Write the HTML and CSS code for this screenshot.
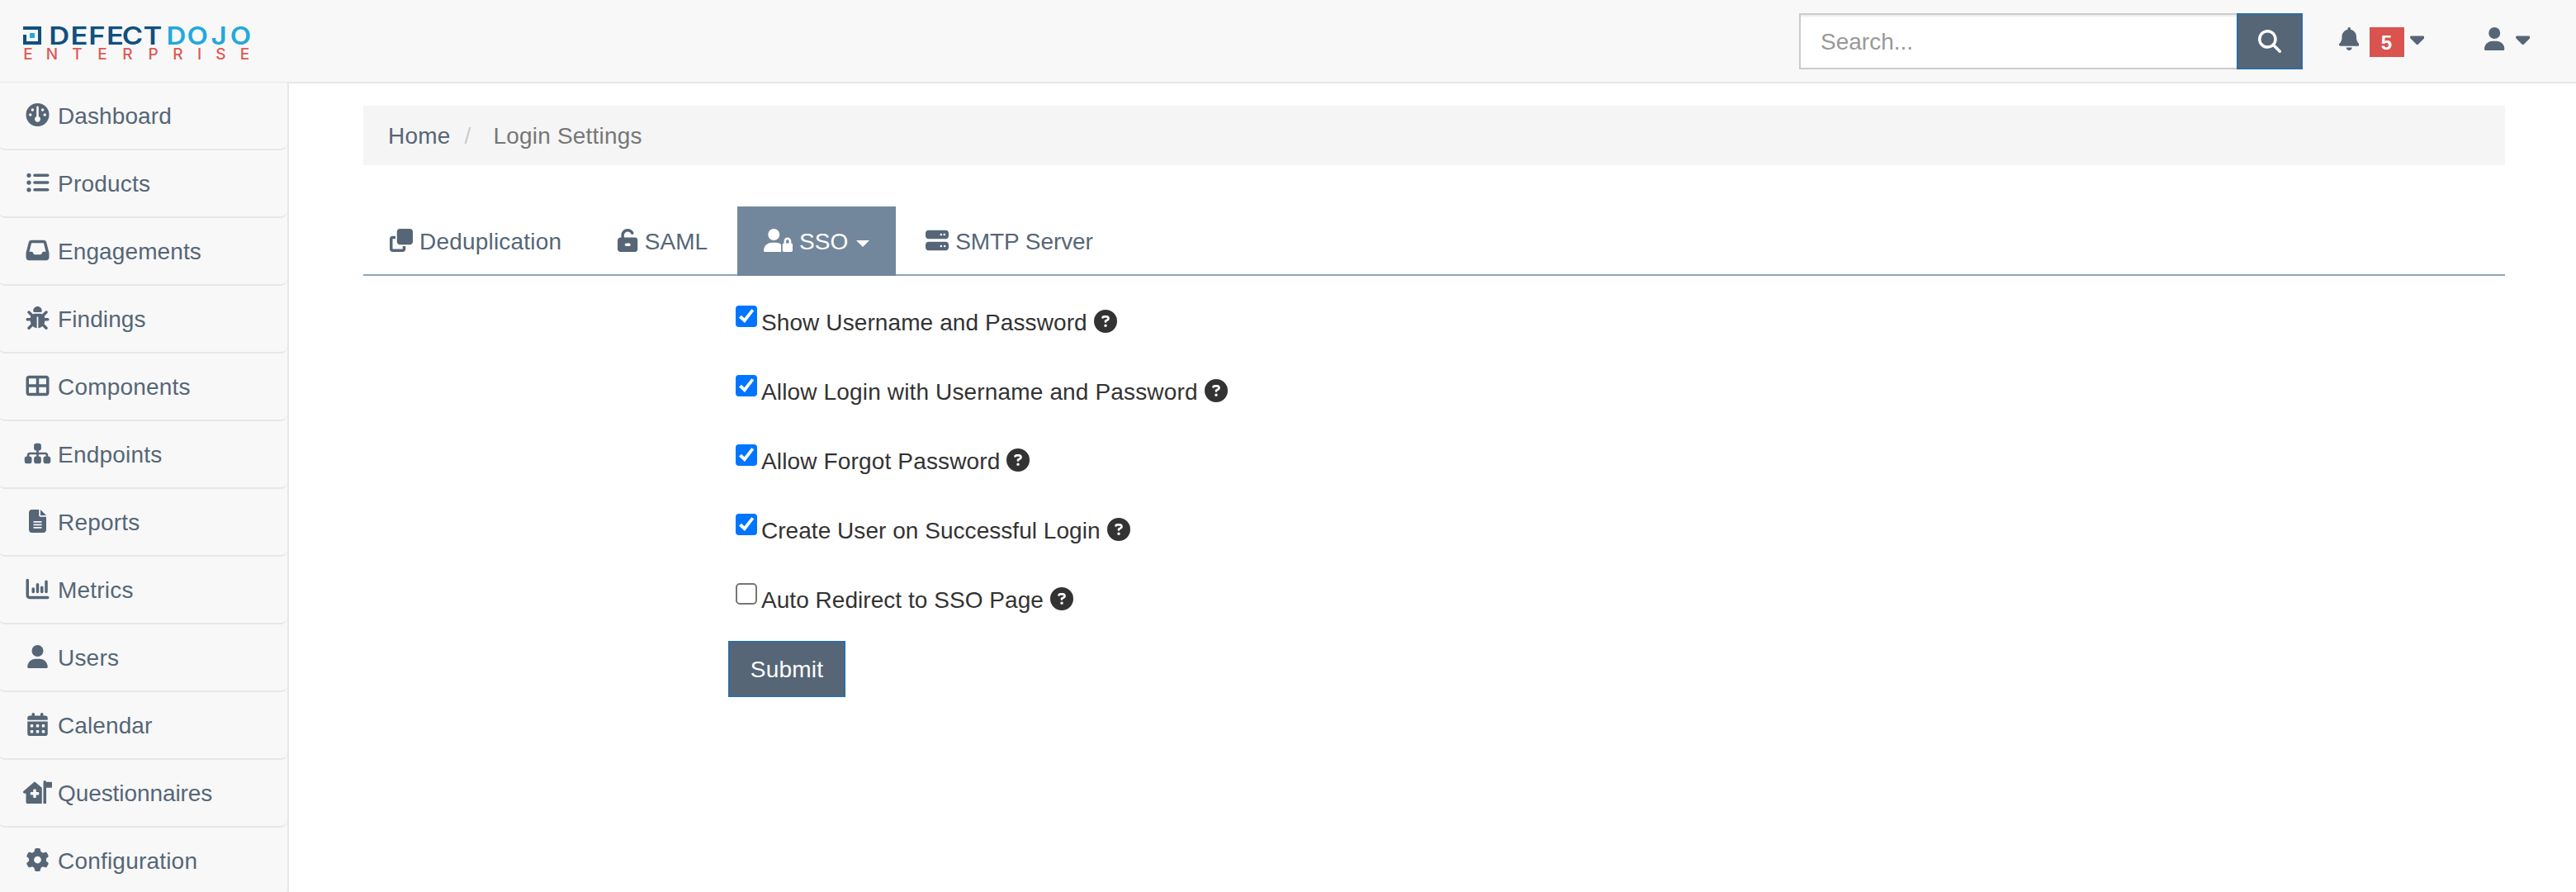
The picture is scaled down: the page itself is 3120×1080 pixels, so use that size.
FILE: index.html
```html
<!DOCTYPE html>
<html lang="en">
<head>
<meta charset="utf-8">
<title>Login Settings | DefectDojo</title>
<link rel="stylesheet" href="styles.css">
</head>
<body>
<svg class="sprite" aria-hidden="true">
  <symbol id="gauge" viewBox="0 0 512 512"><path d="M0 256a256 256 0 1 1 512 0A256 256 0 1 1 0 256zm320 96c0-26.9-16.5-49.9-40-59.3V88c0-13.3-10.7-24-24-24s-24 10.7-24 24V292.7c-23.5 9.5-40 32.5-40 59.3c0 35.3 28.7 64 64 64s64-28.7 64-64zM144 176a32 32 0 1 0 0-64 32 32 0 1 0 0 64zm-16 80a32 32 0 1 0 -64 0 32 32 0 1 0 64 0zm288 32a32 32 0 1 0 0-64 32 32 0 1 0 0 64zM400 144a32 32 0 1 0 -64 0 32 32 0 1 0 64 0z"/></symbol>
  <symbol id="list" viewBox="0 0 512 512"><path d="M64 144a48 48 0 1 0 0-96 48 48 0 1 0 0 96zM192 64c-17.700 0-32 14.300-32 32s14.300 32 32 32H480c17.700 0 32-14.300 32-32s-14.300-32-32-32H192zm0 160c-17.700 0-32 14.300-32 32s14.300 32 32 32H480c17.700 0 32-14.300 32-32s-14.300-32-32-32H192zm0 160c-17.700 0-32 14.300-32 32s14.300 32 32 32H480c17.700 0 32-14.300 32-32s-14.300-32-32-32H192zM64 464a48 48 0 1 0 0-96 48 48 0 1 0 0 96zm48-208a48 48 0 1 0 -96 0 48 48 0 1 0 96 0z"/></symbol>
  <symbol id="inbox" viewBox="0 0 512 512"><path d="M121 32C91.6 32 66 52 58.9 80.5L1.9 308.4C.6 313.5 0 318.7 0 323.9V416c0 35.3 28.7 64 64 64H448c35.3 0 64-28.7 64-64V323.9c0-5.2-.6-10.4-1.9-15.5l-57-227.9C446 52 420.4 32 391 32H121zm0 64H391l48 192H387.8c-12.1 0-23.2 6.8-28.6 17.7l-14.3 28.6c-5.4 10.8-16.5 17.7-28.6 17.7H195.8c-12.1 0-23.2-6.8-28.6-17.7l-14.3-28.6c-5.4-10.8-16.5-17.7-28.6-17.7H73L121 96z"/></symbol>
  <symbol id="bug" viewBox="0 0 512 512"><path d="M256 0c53 0 96 43 96 96v3.6c0 15.7-12.7 28.4-28.4 28.4H188.4c-15.7 0-28.4-12.7-28.4-28.4V96c0-53 43-96 96-96zM41.4 105.4c12.5-12.5 32.8-12.5 45.3 0l64 64c.7 .7 1.3 1.4 1.9 2.1c14.2-7.3 30.4-11.4 47.5-11.4H312c17.1 0 33.2 4.1 47.5 11.4c.6-.7 1.2-1.4 1.9-2.1l64-64c12.5-12.5 32.8-12.5 45.3 0s12.5 32.8 0 45.3l-64 64c-.7 .7-1.4 1.3-2.1 1.9c6.2 12 10.1 25.3 11.1 39.5H480c17.7 0 32 14.3 32 32s-14.3 32-32 32H416c0 24.6-5.5 47.8-15.4 68.6c2.2 1.3 4.2 2.9 6 4.8l64 64c12.5 12.5 12.5 32.8 0 45.3s-32.8 12.5-45.3 0l-63.1-63.1c-24.5 21.8-55.8 36.2-90.3 39.6V240c0-8.800-7.200-16-16-16s-16 7.200-16 16V479.200c-34.500-3.400-65.800-17.800-90.300-39.600L86.600 502.600c-12.500 12.500-32.800 12.500-45.300 0s-12.500-32.800 0-45.300l64-64c1.900-1.900 3.900-3.400 6-4.800C101.500 367.800 96 344.600 96 320H32c-17.700 0-32-14.300-32-32s14.300-32 32-32H96.300c1.100-14.100 5-27.500 11.100-39.500c-.7-.6-1.400-1.200-2.100-1.900l-64-64c-12.500-12.500-12.500-32.800 0-45.300z"/></symbol>
  <symbol id="grid" viewBox="0 0 512 512"><path fill-rule="evenodd" d="M448 96V224H288V96H448zm0 192V416H288V288H448zM224 224H64V96H224V224zM64 288H224V416H64V288zM64 32C28.700 32 0 60.700 0 96V416c0 35.300 28.700 64 64 64H448c35.300 0 64-28.700 64-64V96c0-35.300-28.700-64-64-64H64z"/></symbol>
  <symbol id="sitemap" viewBox="0 0 576 512"><path d="M208 80c0-26.5 21.5-48 48-48h64c26.5 0 48 21.5 48 48v64c0 26.5-21.5 48-48 48h-8v40H464c30.9 0 56 25.1 56 56v32h8c26.5 0 48 21.5 48 48v64c0 26.5-21.5 48-48 48H464c-26.5 0-48-21.5-48-48V368c0-26.5 21.5-48 48-48h8V288c0-4.4-3.6-8-8-8H312v40h8c26.5 0 48 21.5 48 48v64c0 26.5-21.5 48-48 48H256c-26.5 0-48-21.5-48-48V368c0-26.5 21.5-48 48-48h8V280H112c-4.4 0-8 3.6-8 8v32h8c26.5 0 48 21.5 48 48v64c0 26.5-21.5 48-48 48H48c-26.5 0-48-21.5-48-48V368c0-26.5 21.5-48 48-48h8V288c0-30.9 25.1-56 56-56H264V192h-8c-26.5 0-48-21.5-48-48V80z"/></symbol>
  <symbol id="file" viewBox="0 0 384 512"><path fill-rule="evenodd" d="M64 0C28.7 0 0 28.7 0 64V448c0 35.3 28.7 64 64 64H320c35.3 0 64-28.7 64-64V160H256c-17.7 0-32-14.3-32-32V0H64zM256 0V128H384L256 0zM112 256H272c8.8 0 16 7.2 16 16s-7.2 16-16 16H112c-8.8 0-16-7.2-16-16s7.2-16 16-16zm0 64H272c8.8 0 16 7.2 16 16s-7.2 16-16 16H112c-8.8 0-16-7.2-16-16s7.2-16 16-16zm0 64H272c8.8 0 16 7.2 16 16s-7.2 16-16 16H112c-8.8 0-16-7.2-16-16s7.2-16 16-16z"/></symbol>
  <symbol id="chart" viewBox="0 0 512 512"><path d="M32 32c17.700 0 32 14.300 32 32V400c0 8.800 7.200 16 16 16H480c17.700 0 32 14.300 32 32s-14.300 32-32 32H80c-44.200 0-80-35.800-80-80V64C0 46.300 14.300 32 32 32zM160 224c17.700 0 32 14.300 32 32v64c0 17.700-14.300 32-32 32s-32-14.300-32-32V256c0-17.700 14.300-32 32-32zm128-64V320c0 17.700-14.300 32-32 32s-32-14.300-32-32V160c0-17.700 14.300-32 32-32s32 14.300 32 32zm64 32c17.700 0 32 14.300 32 32v96c0 17.700-14.300 32-32 32s-32-14.300-32-32V224c0-17.700 14.300-32 32-32zM480 96V320c0 17.700-14.300 32-32 32s-32-14.300-32-32V96c0-17.700 14.300-32 32-32s32 14.300 32 32z"/></symbol>
  <symbol id="user" viewBox="0 0 448 512"><path d="M224 256A128 128 0 1 0 224 0a128 128 0 1 0 0 256zm-45.7 48C79.8 304 0 383.8 0 482.3C0 498.7 13.3 512 29.7 512H418.3c16.4 0 29.7-13.3 29.7-29.7C448 383.8 368.2 304 269.7 304H178.3z"/></symbol>
  <symbol id="calendar" viewBox="0 0 448 512"><path d="M128 0c17.700 0 32 14.300 32 32V64H288V32c0-17.700 14.300-32 32-32s32 14.300 32 32V64h48c26.500 0 48 21.500 48 48v48H0V112C0 85.500 21.500 64 48 64H96V32c0-17.700 14.300-32 32-32z"/><path fill-rule="evenodd" d="M0 192H448V464c0 26.500-21.500 48-48 48H48c-26.500 0-48-21.500-48-48V192zM80 256h32q16 0 16 16v32q0 16-16 16H80q-16 0-16-16v-32q0-16 16-16zm128 0h32q16 0 16 16v32q0 16-16 16h-32q-16 0-16-16v-32q0-16 16-16zm128 0h32q16 0 16 16v32q0 16-16 16h-32q-16 0-16-16v-32q0-16 16-16zM80 384h32q16 0 16 16v32q0 16-16 16H80q-16 0-16-16v-32q0-16 16-16zm128 0h32q16 0 16 16v32q0 16-16 16h-32q-16 0-16-16v-32q0-16 16-16zm128 0h32q16 0 16 16v32q0 16-16 16h-32q-16 0-16-16v-32q0-16 16-16z"/></symbol>
  <symbol id="house" viewBox="0 0 640 512"><path fill-rule="evenodd" d="M480 0c17.7 0 32 14.3 32 32H624c8.8 0 16 7.2 16 16V144c0 8.8-7.2 16-16 16H512V512H448V32c0-17.7 14.3-32 32-32zM276.8 39.7L416 159V512H96c-17.7 0-32-14.3-32-32V288H32c-13.4 0-25.4-8.3-30-20.9s-1-26.7 9.2-35.4l224-192c12-10.3 29.7-10.3 41.600 0zM224 208v48H176c-8.800 0-16 7.200-16 16v32c0 8.800 7.200 16 16 16h48v48c0 8.800 7.200 16 16 16h32c8.800 0 16-7.200 16-16V320h48c8.800 0 16-7.200 16-16V272c0-8.800-7.200-16-16-16H288V208c0-8.800-7.200-16-16-16H240c-8.800 0-16 7.200-16 16z"/></symbol>
  <symbol id="gear" viewBox="0 0 512 512"><path d="M495.9 166.6c3.2 8.7 .5 18.4-6.4 24.6l-43.3 39.4c1.1 8.3 1.7 16.8 1.7 25.4s-.6 17.1-1.7 25.4l43.3 39.4c6.9 6.2 9.6 15.9 6.4 24.6c-4.4 11.9-9.7 23.3-15.8 34.3l-4.7 8.1c-6.6 11-14 21.4-22.1 31.2c-5.9 7.2-15.7 9.6-24.5 6.8l-55.7-17.7c-13.4 10.3-28.2 18.9-44 25.4l-12.5 57.1c-2 9.1-9 16.3-18.2 17.8c-13.8 2.3-28 3.5-42.5 3.5s-28.7-1.2-42.5-3.5c-9.2-1.5-16.2-8.7-18.2-17.8l-12.5-57.1c-15.8-6.5-30.6-15.1-44-25.4L83.1 425.9c-8.8 2.8-18.6 .3-24.5-6.8c-8.1-9.8-15.5-20.2-22.1-31.2l-4.7-8.1c-6.1-11-11.4-22.4-15.8-34.3c-3.2-8.7-.5-18.4 6.4-24.6l43.3-39.4C64.6 273.1 64 264.6 64 256s.6-17.1 1.7-25.4L22.4 191.2c-6.9-6.2-9.6-15.9-6.4-24.6c4.4-11.9 9.7-23.3 15.8-34.3l4.7-8.1c6.6-11 14-21.4 22.1-31.2c5.9-7.2 15.7-9.6 24.5-6.8l55.7 17.7c13.4-10.3 28.2-18.9 44-25.4l12.5-57.1c2-9.1 9-16.3 18.2-17.8C227.3 1.2 241.5 0 256 0s28.7 1.2 42.5 3.5c9.2 1.5 16.2 8.7 18.2 17.8l12.5 57.1c15.8 6.5 30.6 15.1 44 25.4l55.7-17.7c8.8-2.8 18.6-.3 24.5 6.8c8.1 9.8 15.5 20.2 22.1 31.2l4.7 8.1c6.1 11 11.4 22.4 15.8 34.3zM256 336a80 80 0 1 0 0-160 80 80 0 1 0 0 160z"/></symbol>
  <symbol id="search" viewBox="0 0 512 512"><path d="M416 208c0 45.9-14.9 88.3-40 122.7L502.600 457.400c12.500 12.500 12.500 32.800 0 45.300s-32.800 12.500-45.300 0L330.700 376c-34.400 25.200-76.800 40-122.700 40C93.100 416 0 322.900 0 208S93.100 0 208 0S416 93.100 416 208zM208 352a144 144 0 1 0 0-288 144 144 0 1 0 0 288z"/></symbol>
  <symbol id="bell" viewBox="0 0 448 512"><path d="M224 0c-17.7 0-32 14.3-32 32V51.2C119 66 64 130.6 64 208v18.8c0 47-17.3 92.4-48.5 127.6l-7.4 8.3c-8.4 9.4-10.4 22.9-5.3 34.4S19.4 416 32 416H416c12.6 0 24-7.4 29.2-18.9s3.1-25-5.3-34.4l-7.4-8.3C401.3 319.2 384 273.9 384 226.8V208c0-77.4-55-142-128-156.8V32c0-17.7-14.3-32-32-32zm45.3 493.300c12-12 18.700-28.300 18.700-45.300H224 160c0 17 6.700 33.300 18.700 45.300s28.300 18.700 45.300 18.700s33.300-6.700 45.300-18.700z"/></symbol>
  <symbol id="caret" viewBox="0 0 320 512"><path d="M137.400 374.600c12.500 12.500 32.800 12.500 45.300 0l128-128c9.200-9.200 11.900-22.900 6.900-34.900s-16.600-19.800-29.600-19.800L32 192c-12.900 0-24.600 7.800-29.600 19.800s-2.200 25.700 6.900 34.900l128 128z"/></symbol>
  <symbol id="clone" viewBox="0 0 512 512"><path d="M288 448H64V224h64V160H64c-35.300 0-64 28.700-64 64V448c0 35.300 28.700 64 64 64H288c35.300 0 64-28.700 64-64V384H288v64zm-64-96H448c35.300 0 64-28.700 64-64V64c0-35.300-28.700-64-64-64H224c-35.300 0-64 28.700-64 64V288c0 35.300 28.700 64 64 64z"/></symbol>
  <symbol id="unlock" viewBox="0 0 448 512"><path fill-rule="evenodd" d="M224 64c-44.200 0-80 35.800-80 80v48H384c35.300 0 64 28.700 64 64V448c0 35.300-28.700 64-64 64H64c-35.300 0-64-28.700-64-64V256c0-35.300 28.700-64 64-64H80V144C80 64.500 144.500 0 224 0c57.500 0 107 33.700 130.100 82.300c7.600 16 .8 35.100-15.200 42.600s-35.100 .8-42.600-15.200C283.400 82.600 255.900 64 224 64zm32 320c17.700 0 32-14.300 32-32s-14.300-32-32-32H192c-17.700 0-32 14.300-32 32s14.300 32 32 32h64z"/></symbol>
  <symbol id="user-lock" viewBox="0 0 640 512"><path fill-rule="evenodd" d="M224 256A128 128 0 1 0 224 0a128 128 0 1 0 0 256zm-45.700 48C79.800 304 0 383.800 0 482.300C0 498.700 13.300 512 29.700 512H392.600c-5.400-9.400-8.600-20.300-8.600-32V352c0-2.100 .1-4.200 .3-6.300c-31-26-71-41.700-114.600-41.700H178.300zM528 240c17.700 0 32 14.300 32 32v48H496V272c0-17.700 14.300-32 32-32zm-80 32v48c-17.700 0-32 14.300-32 32V480c0 17.700 14.300 32 32 32H608c17.700 0 32-14.300 32-32V352c0-17.700-14.300-32-32-32V272c0-44.200-35.800-80-80-80s-80 35.800-80 80z"/></symbol>
  <symbol id="server" viewBox="0 0 512 512"><path fill-rule="evenodd" d="M64 32C28.700 32 0 60.700 0 96v64c0 35.300 28.700 64 64 64H448c35.300 0 64-28.700 64-64V96c0-35.300-28.700-64-64-64H64zm280 72a24 24 0 1 1 0 48 24 24 0 1 1 0-48zm48 24a24 24 0 1 1 48 0 24 24 0 1 1 -48 0zM64 288c-35.300 0-64 28.700-64 64v64c0 35.300 28.700 64 64 64H448c35.300 0 64-28.700 64-64V352c0-35.300-28.700-64-64-64H64zm280 72a24 24 0 1 1 0 48 24 24 0 1 1 0-48zm56 24a24 24 0 1 1 48 0 24 24 0 1 1 -48 0z"/></symbol>
  <symbol id="question" viewBox="0 0 512 512"><path fill-rule="evenodd" d="M256 512A256 256 0 1 0 256 0a256 256 0 1 0 0 512zM169.800 165.300c7.900-22.300 29.100-37.300 52.800-37.300h58.300c34.900 0 63.100 28.300 63.100 63.100c0 22.600-12.100 43.500-31.700 54.800L280 264.400c-.2 13-10.900 23.600-24 23.600c-13.300 0-24-10.700-24-24V250.500c0-8.600 4.600-16.500 12.100-20.800l44.300-25.400c4.700-2.700 7.600-7.700 7.600-13.100c0-8.400-6.800-15.100-15.100-15.100H222.600c-3.400 0-6.400 2.100-7.500 5.300l-.4 1.200c-4.400 12.500-18.200 19-30.600 14.600s-19-18.200-14.600-30.600l.4-1.200zM224 352a32 32 0 1 1 64 0 32 32 0 1 1 -64 0z"/></symbol>
</svg>

<header class="topbar">
  <a class="brand" aria-label="DefectDojo Enterprise">
    <svg class="logo" viewBox="-4 -12 284 64" width="284" height="64">
      <path class="logo-mark" d="M0 2H20V20H2V10"/>
      <rect class="logo-dot" x="8" y="8" width="6" height="6"/>
      <text class="logo-defect" transform="scale(1.15 1)" y="22" x="38 59.100 77.800 97 115.200 136.500">DEFECT</text>
      <text class="logo-dojo" transform="scale(1.1 1)" y="22" x="168.600 192 215.500 239.500">DOJO</text>
      <text class="logo-enterprise" y="40" x="6 35 65.500 96 126.500 157.500 187.500 213.500 239.500 268.500">ENTERPRISE</text>
    </svg>
  </a>
  <div class="search">
    <input class="search-input" type="text" placeholder="Search..." aria-label="Search">
    <button class="btn search-btn" aria-label="Submit search"><svg class="icon"><use href="#search"/></svg></button>
  </div>
  <a class="alerts"><svg class="icon icon-narrow"><use href="#bell"/></svg><span class="badge">5</span><svg class="icon icon-caret"><use href="#caret"/></svg></a>
  <a class="account"><svg class="icon icon-narrow"><use href="#user"/></svg><svg class="icon icon-caret"><use href="#caret"/></svg></a>
</header>

<div class="page">
  <nav class="sidebar">
    <a class="nav-item snug"><svg class="icon icon-fw"><use href="#gauge"/></svg><span>Dashboard</span></a>
    <a class="nav-item"><svg class="icon icon-fw"><use href="#list"/></svg><span>Products</span></a>
    <a class="nav-item snug"><svg class="icon icon-fw"><use href="#inbox"/></svg><span>Engagements</span></a>
    <a class="nav-item snug"><svg class="icon icon-fw"><use href="#bug"/></svg><span>Findings</span></a>
    <a class="nav-item"><svg class="icon icon-fw"><use href="#grid"/></svg><span>Components</span></a>
    <a class="nav-item"><svg class="icon icon-fw"><use href="#sitemap"/></svg><span>Endpoints</span></a>
    <a class="nav-item"><svg class="icon icon-fw"><use href="#file"/></svg><span>Reports</span></a>
    <a class="nav-item"><svg class="icon icon-fw"><use href="#chart"/></svg><span>Metrics</span></a>
    <a class="nav-item"><svg class="icon icon-fw"><use href="#user"/></svg><span>Users</span></a>
    <a class="nav-item snug"><svg class="icon icon-fw"><use href="#calendar"/></svg><span>Calendar</span></a>
    <a class="nav-item tight"><svg class="icon icon-fw"><use href="#house"/></svg><span>Questionnaires</span></a>
    <a class="nav-item"><svg class="icon icon-fw"><use href="#gear"/></svg><span>Configuration</span></a>
  </nav>

  <main class="content">
    <div class="breadcrumb"><a class="crumb">Home</a><span class="slash">/</span><span class="crumb-current">Login Settings</span></div>

    <div class="tabs">
      <a class="tab loose"><svg class="icon"><use href="#clone"/></svg><span>Deduplication</span></a>
      <a class="tab"><svg class="icon icon-narrow"><use href="#unlock"/></svg><span>SAML</span></a>
      <a class="tab tab-active"><svg class="icon icon-fw"><use href="#user-lock"/></svg><span>SSO</span><i class="tab-caret"></i></a>
      <a class="tab tight"><svg class="icon"><use href="#server"/></svg><span>SMTP Server</span></a>
    </div>

    <form class="settings">
      <label class="check snug"><input class="check-box" type="checkbox" checked><span>Show Username and Password</span><svg class="icon help"><use href="#question"/></svg></label>
      <label class="check airy"><input class="check-box" type="checkbox" checked><span>Allow Login with Username and Password</span><svg class="icon help"><use href="#question"/></svg></label>
      <label class="check airy"><input class="check-box" type="checkbox" checked><span>Allow Forgot Password</span><svg class="icon help"><use href="#question"/></svg></label>
      <label class="check"><input class="check-box" type="checkbox" checked><span>Create User on Successful Login</span><svg class="icon help"><use href="#question"/></svg></label>
      <label class="check"><input class="check-box" type="checkbox"><span>Auto Redirect to SSO Page</span><svg class="icon help"><use href="#question"/></svg></label>
      <button class="btn submit" type="button">Submit</button>
    </form>
  </main>
</div>
</body>
</html>
```
FILE: styles.css
```css
* { box-sizing: border-box; }

body {
  margin: 0;
  height: 1080px;
  overflow: hidden;
  background: #fff;
  color: #333;
  font: 28px/40px "Liberation Sans", Arial, sans-serif;
}

.sprite { display: none; }

.icon {
  display: block;
  flex: none;
  width: 28px;
  height: 28px;
  fill: currentColor;
}
.icon-narrow { width: 24.5px; }
.icon-caret { width: 17.5px; }
.icon-fw { width: 35px; }

.btn {
  border: 2px solid #2e6da4;
  border-radius: 0;
  background: #566677;
  color: #fff;
  font: inherit;
}

/* Top bar */
.topbar {
  display: flex;
  height: 101px;
  padding-right: 56px;
  background: #f8f8f8;
  border-bottom: 2px solid #e7e7e7;
  color: #566677;
}
.brand { padding: 20px 0 0 24px; margin-right: auto; }
.logo { display: block; }
.logo text { font-family: Inter, sans-serif; text-anchor: middle; }
.logo-mark { fill: none; stroke: #10507e; stroke-width: 4; }
.logo-dot { fill: #23a8dc; }
.logo-defect, .logo-dojo { font-size: 30px; font-weight: 600; }
.logo-defect { fill: #10507e; }
.logo-dojo { fill: #23a8dc; }
.logo-enterprise { font-size: 19px; font-weight: 500; fill: #de5855; }

.search { display: flex; width: 610px; height: 68px; margin-top: 16px; }
.search-input {
  flex: 1;
  min-width: 0;
  padding: 2px 24px 0;
  border: 2px solid #ccc;
  border-right: 0;
  border-radius: 0;
  background: #fff;
  box-shadow: inset 0 2px 2px rgba(0, 0, 0, .075);
  font: inherit;
}
.search-input::placeholder { color: #999; }
.search-btn { width: 80px; padding: 17px 24px; }

.alerts, .account { display: flex; padding-top: 33px; }
.alerts { margin-left: 43.5px; }
.account { margin-left: 73px; }
.account .icon-caret { margin-left: 13px; }
.badge {
  width: 42px;
  height: 36px;
  margin: 0 7px 0 12.5px;
  background: #d9534f;
  color: #fff;
  font-size: 24px;
  font-weight: 700;
  line-height: 37px;
  text-align: center;
}

.page { display: flex; margin-top: -1px; }

/* Sidebar */
.sidebar {
  width: 350px;
  height: 980px;
  overflow: hidden;
  background: #f8f8f8;
  border-right: 2px solid #e7e7e7;
}
.nav-item {
  display: flex;
  height: 82px;
  margin-left: -2px;
  gap: 7px;
  padding: 21px 0 0 30px;
  border-bottom: 2px solid #e7e7e7;
  border-radius: 0 0 8px 8px;
  color: #566677;
  letter-spacing: .2px;
}
.nav-item .icon { margin-top: 4px; }

/* Main column */
.content { flex: 1; padding: 28px 86px 0 90px; }
.breadcrumb {
  display: flex;
  height: 72px;
  padding: 17px 30px 15px;
  background: #f5f5f5;
  letter-spacing: .2px;
}
.crumb { color: #566677; }
.slash { margin: 0 27px 0 17px; color: #ccc; }
.crumb-current { color: #777; }

.tabs {
  display: flex;
  gap: 4px;
  height: 84px;
  margin-top: 50px;
  border-bottom: 2px solid #92a5b9;
  color: #566677;
}
.tab { display: flex; gap: 8px; height: 84px; padding: 23px 32px 0; }
.tab .icon { margin-top: 4px; }
.tab-active { background: #73879c; color: #fff; }
.tab-caret {
  margin: 18px 0 0 2px;
  border: 8px solid transparent;
  border-top-color: currentColor;
  border-bottom: 0;
  height: 8px;
}

/* Login options */
.settings { padding: 36px 0 0 442px; }
.check {
  display: flex;
  height: 84px;
  padding-left: 9px;
  letter-spacing: .04px;
}
.check span { margin: 1px 8px 0 5px; }
.check-box {
  appearance: none;
  flex: none;
  width: 26px;
  height: 26px;
  margin: 0;
  border: 2px solid #767676;
  border-radius: 5px;
  background: #fff;
}
.check-box:checked { border: 0; border-radius: 4px; background: #0075ff; }
.check-box:checked::before {
  content: "";
  display: block;
  width: 26px;
  height: 26px;
  background: #fff;
  clip-path: polygon(4px 14.5px, 7px 11.8px, 10.5px 15.3px, 19.3px 4.2px, 22.3px 6.3px, 11px 21px);
}
.check .help { margin-top: 5px; }
.submit {
  display: block;
  width: 142px;
  height: 68px;
  margin-top: -14px;
  padding: 1px 0 0;
  letter-spacing: .2px;
}

/* Tracking steps for labels */
.tight { letter-spacing: -.08px; }
.snug { letter-spacing: .1px; }
.airy { letter-spacing: .15px; }
.loose { letter-spacing: .2px; }
```
